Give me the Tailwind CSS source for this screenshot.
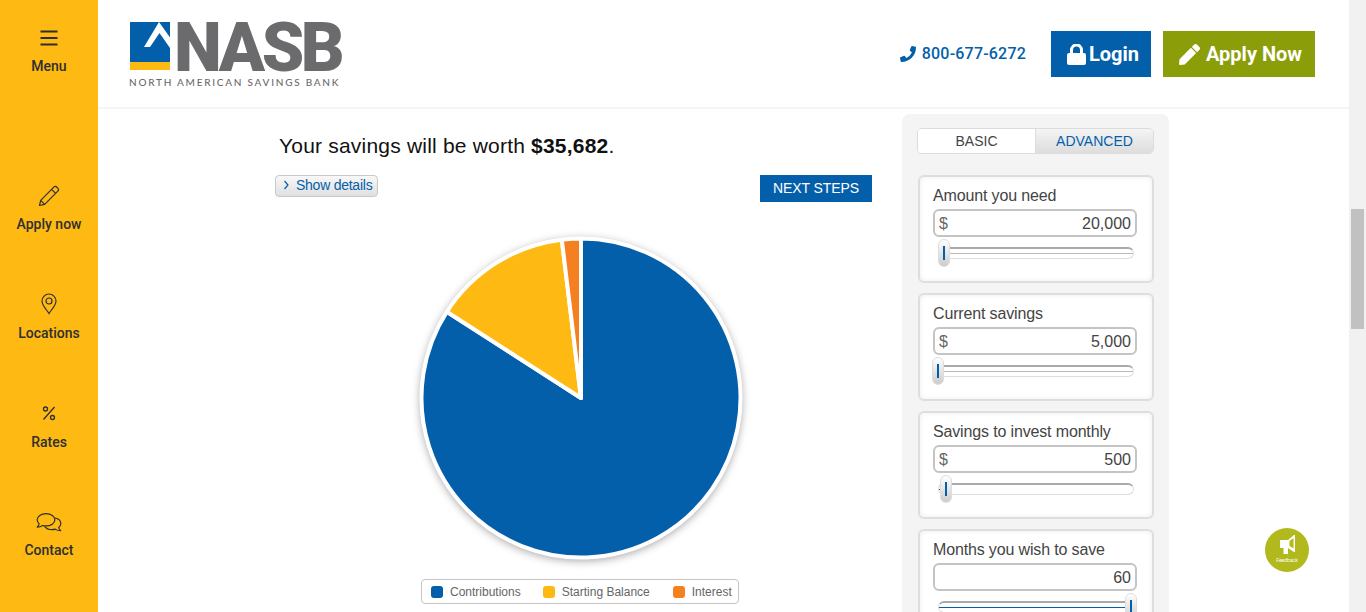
<!DOCTYPE html>
<html lang="en">
<head>
<meta charset="utf-8">
<title>NASB Savings Calculator</title>
<script src="https://cdn.jsdelivr.net/npm/@tailwindcss/browser@4"></script>
</head>
<body class="m-0 bg-white">
<div class="relative flex h-[612px] w-[1366px] overflow-hidden bg-white font-['Liberation_Sans',Arial,sans-serif]">

  <!-- Sidebar -->
  <aside class="flex w-[98px] shrink-0 flex-col bg-[#feb913] font-['Roboto',sans-serif] text-[14px] font-medium text-[#2f2f2f]">
    <a class="flex h-[158px] flex-col items-center pt-[28px]">
      <svg class="h-[20px] w-[20px]" viewBox="0 0 20 20" fill="none" stroke="#2f2f2f" stroke-width="2"><path d="M1.500 3.500h17M1.500 10h17M1.500 16.500h17"/></svg>
      <span class="mt-[10px] leading-[16px]">Menu</span>
    </a>
    <a class="flex h-[108.6px] flex-col items-center pt-[27px]">
      <svg class="h-[22px] w-[22px]" viewBox="0 0 22 22" fill="none" stroke="#2f2f2f" stroke-width="1.2" stroke-linejoin="round"><path d="M1.500 20.500l1.200-5.200L15.800 2.200a2.200 2.200 0 0 1 3.100 0l.9.9a2.200 2.200 0 0 1 0 3.100L6.700 19.300zM2.700 15.300l4 4M13.600 4.400l4 4"/></svg>
      <span class="mt-[9px] leading-[16px]">Apply now</span>
    </a>
    <a class="flex h-[108.6px] flex-col items-center pt-[26px]">
      <svg class="h-[22px] w-[22px]" viewBox="0 0 22 22" fill="none" stroke="#2f2f2f" stroke-width="1.2"><path d="M11 20.500C8.500 16.500 4 12.500 4 8a7 7 0 0 1 14 0c0 4.500-4.500 8.500-7 12.500z"/><circle cx="11" cy="8" r="3"/></svg>
      <span class="mt-[10px] leading-[16px]">Locations</span>
    </a>
    <a class="flex h-[108.6px] flex-col items-center pt-[27px]">
      <svg class="h-[22px] w-[22px]" viewBox="0 0 22 22" fill="none" stroke="#2f2f2f" stroke-width="1.3"><path d="M16.500 5L5.500 17.500"/><circle cx="7.500" cy="7" r="2"/><circle cx="14.500" cy="15.500" r="2"/></svg>
      <span class="mt-[10px] leading-[16px]">Rates</span>
    </a>
    <a class="flex h-[108.6px] flex-col items-center pt-[29px]">
      <svg class="h-[19px] w-[26px]" viewBox="1 1 22 16" fill="none" stroke="#2f2f2f" stroke-width="1" stroke-linejoin="round"><path d="M9.500 1.500c4.200 0 7.500 2.300 7.500 5.200s-3.300 5.200-7.500 5.200c-1 0-2-.1-2.900-.4-1 .8-2.600 1.400-4.600 1.400.8-.7 1.500-1.700 1.700-2.700C2.700 9.300 2 8 2 6.700 2 3.800 5.300 1.500 9.500 1.500z"/><path d="M17 5.200c2.800.5 5 2.400 5 4.700 0 1.300-.7 2.500-1.800 3.400.2 1 .9 2 1.700 2.700-2 0-3.600-.6-4.600-1.400-.9.300-1.900.4-2.800.4-2.700 0-5-1.100-6.300-2.800"/></svg>
      <span class="mt-[10px] leading-[16px]">Contact</span>
    </a>
  </aside>

  <!-- Main -->
  <main class="flex min-w-0 flex-1 flex-col">
    <header class="flex h-[109px] shrink-0 items-start border-b-2 border-[#f5f5f5]">
      <div class="ml-[32px] mt-[22px] w-[212px]">
        <div class="flex h-[48px] items-start gap-[4px]">
          <svg class="h-[48px] w-[40px] shrink-0" viewBox="0 0 40 48"><rect width="40" height="48" fill="#045fab"/><rect y="40" width="40" height="8" fill="#feb913"/><path d="M29 0L40 15.500V26L29.500 11 20 25H14z" fill="#fff"/></svg>
          <span class="mt-[2px] font-['Roboto',sans-serif] text-[68px] leading-[48px] font-black tracking-[-3.500px] text-[#6b6b6d]">NASB</span>
        </div>
        <div class="ml-[-1px] mt-[6px] whitespace-nowrap font-['Lato',sans-serif] text-[10px] leading-[12px] font-medium tracking-[1.750px] text-[#6b6b6d]">NORTH AMERICAN SAVINGS BANK</div>
      </div>
      <div class="ml-auto mr-[34px] mt-[31px] flex items-center">
        <svg class="mr-[6px] h-[16px] w-[16px] -scale-x-100" viewBox="0 0 512 512" fill="#045fab"><path d="M497.400 361.800l-112-48a24 24 0 0 0-28 6.900l-49.600 60.600A370.700 370.700 0 0 1 130.600 204.100l60.600-49.600a23.900 23.900 0 0 0 6.900-28l-48-112A24.200 24.200 0 0 0 122.600.6l-104 24A24 24 0 0 0 0 48c0 256.500 207.900 464 464 464a24 24 0 0 0 23.400-18.600l24-104a24.300 24.300 0 0 0-14-27.600z"/></svg>
        <span class="mr-[25px] font-['Roboto',sans-serif] text-[16px] font-medium tracking-[.2px] text-[#045fab]">800-677-6272</span>
        <a class="flex h-[46px] w-[100px] items-center bg-[#045fab] pl-[16px] font-['Roboto',sans-serif] text-[20px] font-bold text-white">
          <svg class="mr-[3px] h-[21px] w-[19px]" viewBox="0 0 19 21" fill="#fff"><path d="M3 9V6a6.500 6.500 0 0 1 13 0v3h1a2 2 0 0 1 2 2v8a2 2 0 0 1-2 2H2a2 2 0 0 1-2-2v-8a2 2 0 0 1 2-2zm3 0h7V6a3.500 3.500 0 0 0-7 0z"/></svg>
          Login
        </a>
        <a class="ml-[12px] flex h-[46px] w-[152px] items-center bg-[#8b9e09] pl-[16px] font-['Roboto',sans-serif] text-[20px] font-bold text-white">
          <svg class="mr-[6px] h-[21px] w-[21px]" viewBox="0 0 512 512" fill="#fff"><path d="M290.700 93.200l128 128-278 278-114.100 12.600C11.400 513.500-1.600 500.600.1 485.300l12.700-114.200zm207.200-19.100l-60.100-60.100c-18.700-18.700-49.100-18.700-67.900 0l-56.600 56.600 128 128 56.600-56.600c18.800-18.800 18.800-49.200 0-67.900z"/></svg>
          Apply Now
        </a>
      </div>
    </header>

    <div class="flex min-h-0 flex-1">
      <!-- Results -->
      <section class="ml-[177px] w-[597px] shrink-0 pt-[23px]">
        <h1 class="ml-[4px] text-[21px] leading-[28px] font-normal tracking-[.2px] text-[#111]">Your savings will be worth <b>$35,682</b>.</h1>
        <div class="mt-[15px] flex items-start justify-between">
          <a class="flex h-[22px] w-[103px] items-center rounded-[4px] border border-[#c9c9c9] bg-linear-to-b from-[#f8f8f8] to-[#e0e0e0] pb-[2px] pl-[6px] text-[14px] tracking-[-.25px] text-[#045fab]">
            <svg class="mr-[6px] ml-[1px] h-[10px] w-[7px]" viewBox="0 0 7 10" fill="none" stroke="#045fab" stroke-width="1.200"><path d="M1.500 1l3.500 4-3.500 4"/></svg>
            Show details
          </a>
          <a class="flex h-[27px] w-[112px] items-center justify-center bg-[#045fab] text-[14px] tracking-[-.1px] text-white">NEXT STEPS</a>
        </div>
        <svg class="ml-[141px] mt-[31px] block h-[330px] w-[330px] overflow-visible" viewBox="0 0 330 330">
          <circle cx="165" cy="165" r="161" fill="#fff" class="drop-shadow-[0_2px_4px_rgba(0,0,0,0.35)]"/>
          <g stroke="#fff" stroke-width="4" stroke-linejoin="round">
            <path d="M165 165L165 5.500A159.500 159.500 0 1 1 30.800 78.800Z" fill="#045fab"/>
            <path d="M165 165L30.800 78.800A159.500 159.500 0 0 1 145.800 6.700Z" fill="#feb913"/>
            <path d="M165 165L145.800 6.700A159.500 159.500 0 0 1 165 5.500Z" fill="#f58020"/>
          </g>
        </svg>
        <div class="ml-[146px] mt-[16px] flex h-[25px] w-[318px] items-center rounded-[4px] border border-[#c4c4c4] pl-[9px] pt-[1px] text-[12px] text-[#666]">
          <i class="mr-[7px] h-[12px] w-[12px] rounded-[3px] bg-[#045fab]"></i><span>Contributions</span>
          <i class="ml-[22px] mr-[7px] h-[12px] w-[12px] rounded-[3px] bg-[#feb913]"></i><span>Starting Balance</span>
          <i class="ml-[23px] mr-[7px] h-[12px] w-[12px] rounded-[3px] bg-[#f58020]"></i><span>Interest</span>
        </div>
      </section>

      <!-- Calculator panel -->
      <section class="ml-[30px] mt-[5px] h-[600px] w-[267px] shrink-0 rounded-t-[8px] bg-[#f4f4f4] px-[15px] pt-[14px]">
        <div class="flex h-[26px] w-[237px] overflow-hidden rounded-[5px] border border-[#dcdcdc] text-[14px]">
          <div class="flex w-[117px] items-center justify-center bg-white text-[#444]">BASIC</div>
          <div class="flex flex-1 items-center justify-center border-l border-[#dcdcdc] bg-linear-to-b from-[#f4f4f4] to-[#dddddd] text-[#045fab]">ADVANCED</div>
        </div>

        <div class="mt-[21px] flex flex-col gap-[10px]">
          <div class="relative ml-[1px] h-[108px] w-[236px] rounded-[6px] border-2 border-[#dedede] bg-white px-[13px] pt-[9px] shadow-[inset_0_0_5px_rgba(0,0,0,0.08)]">
            <div class="text-[16px] leading-[20px] tracking-[-.15px] text-[#444]">Amount you need</div>
            <div class="mt-[3px] flex h-[28px] w-[204px] items-center justify-between rounded-[6px] border-2 border-[#c4c4c4] pl-[4px] pr-[4px] pt-[1px] text-[16px] text-[#444]"><span class="text-[#666]">$</span><span>20,000</span></div>
            <div class="relative ml-[5px] mt-[10px] h-[12px] w-[196px] rounded-full border border-[#dedede] border-t-[#aaa] border-t-2">
              <div class="mt-[4px] h-px bg-[#bbb]"></div>
              <div class="absolute left-[-1px] top-[-10px] flex h-[28px] w-[12px] items-center justify-center rounded-[6px] border border-[#ddd] bg-linear-to-b from-white to-[#ccc]"><i class="h-[14px] w-[2px] bg-[#045fab]"></i></div>
            </div>
          </div>

          <div class="relative ml-[1px] h-[108px] w-[236px] rounded-[6px] border-2 border-[#dedede] bg-white px-[13px] pt-[9px] shadow-[inset_0_0_5px_rgba(0,0,0,0.08)]">
            <div class="text-[16px] leading-[20px] tracking-[-.15px] text-[#444]">Current savings</div>
            <div class="mt-[3px] flex h-[28px] w-[204px] items-center justify-between rounded-[6px] border-2 border-[#c4c4c4] pl-[4px] pr-[4px] pt-[1px] text-[16px] text-[#444]"><span class="text-[#666]">$</span><span>5,000</span></div>
            <div class="relative ml-[5px] mt-[10px] h-[12px] w-[196px] rounded-full border border-[#dedede] border-t-[#aaa] border-t-2">
              <div class="mt-[4px] h-px bg-[#bbb]"></div>
              <div class="absolute left-[-7px] top-[-10px] flex h-[28px] w-[12px] items-center justify-center rounded-[6px] border border-[#ddd] bg-linear-to-b from-white to-[#ccc]"><i class="h-[14px] w-[2px] bg-[#045fab]"></i></div>
            </div>
          </div>

          <div class="relative ml-[1px] h-[108px] w-[236px] rounded-[6px] border-2 border-[#dedede] bg-white px-[13px] pt-[9px] shadow-[inset_0_0_5px_rgba(0,0,0,0.08)]">
            <div class="text-[16px] leading-[20px] tracking-[-.15px] text-[#444]">Savings to invest monthly</div>
            <div class="mt-[3px] flex h-[28px] w-[204px] items-center justify-between rounded-[6px] border-2 border-[#c4c4c4] pl-[4px] pr-[4px] pt-[1px] text-[16px] text-[#444]"><span class="text-[#666]">$</span><span>500</span></div>
            <div class="relative ml-[5px] mt-[10px] h-[12px] w-[196px] rounded-full border border-[#dedede] border-t-[#aaa] border-t-2">
              <div class="mt-[4px] h-px w-[6px] bg-[#045fab]"></div>
              <div class="absolute left-[1px] top-[-10px] flex h-[28px] w-[12px] items-center justify-center rounded-[6px] border border-[#ddd] bg-linear-to-b from-white to-[#ccc]"><i class="h-[14px] w-[2px] bg-[#045fab]"></i></div>
            </div>
          </div>

          <div class="relative ml-[1px] h-[108px] w-[236px] rounded-[6px] border-2 border-[#dedede] bg-white px-[13px] pt-[9px] shadow-[inset_0_0_5px_rgba(0,0,0,0.08)]">
            <div class="text-[16px] leading-[20px] tracking-[-.15px] text-[#444]">Months you wish to save</div>
            <div class="mt-[3px] flex h-[28px] w-[204px] items-center justify-end rounded-[6px] border-2 border-[#c4c4c4] pl-[4px] pr-[4px] pt-[1px] text-[16px] text-[#444]"><span>60</span></div>
            <div class="relative ml-[5px] mt-[10px] h-[12px] w-[196px] rounded-full border border-[#dedede] border-t-[#aaa] border-t-2">
              <div class="mt-[4px] h-px bg-[#045fab]"></div>
              <div class="absolute right-[-4px] top-[-10px] flex h-[28px] w-[12px] items-center justify-center rounded-[6px] border border-[#ddd] bg-linear-to-b from-white to-[#ccc]"><i class="h-[14px] w-[2px] bg-[#045fab]"></i></div>
            </div>
          </div>
        </div>
      </section>
    </div>
  </main>

  <!-- Scrollbar -->
  <div class="w-[17px] shrink-0 bg-[#f1f1f1] pl-[2px] pt-[209px]">
    <div class="h-[120px] w-[13px] bg-[#c1c1c1]"></div>
  </div>

  <!-- Feedback -->
  <div class="absolute left-[1265px] top-[528px] flex h-[44px] w-[44px] flex-col items-center rounded-full bg-[#b1b91c] pt-[7px] text-white">
    <svg class="h-[19px] w-[15px]" viewBox="0 0 15 19" fill="#fff"><path d="M0 6c0-.6.4-1 1-1h7l6-5h1v17h-1l-6-4H8v6H3.500v-6H1c-.6 0-1-.4-1-1z"/><path d="M9.500 6L13.500 3v10.500l-4-2.500z" fill="#b1b91c"/></svg>
    <span class="mt-[3px] font-['Roboto',sans-serif] text-[5px] leading-[6px]">Feedback</span>
  </div>
</div>
</body>
</html>
